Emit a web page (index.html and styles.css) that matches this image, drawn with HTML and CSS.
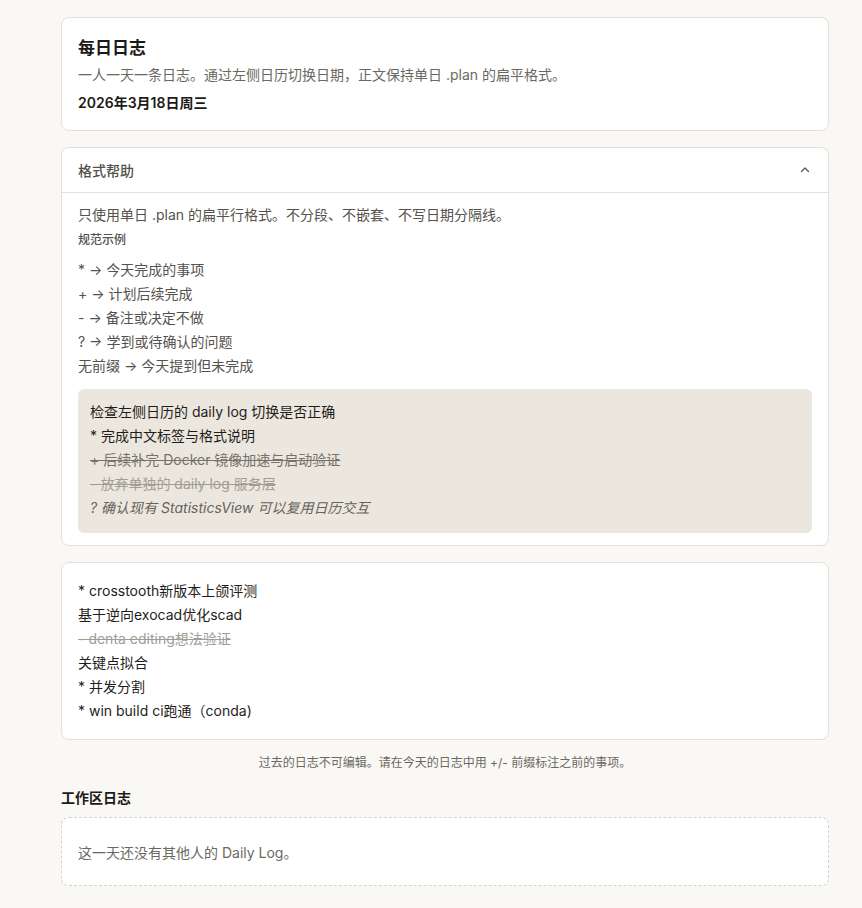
FILE: index.html
```html
<!DOCTYPE html>
<html lang="zh-CN">
<head>
<meta charset="utf-8">
<link rel="stylesheet" href="styles.css">
</head>
<body>
<main class="page">
  <section class="card intro">
    <h1 class="title">每日日志</h1>
    <p class="subtitle">一人一天一条日志。通过左侧日历切换日期，正文保持单日 .plan 的扁平格式。</p>
    <p class="date">2026年3月18日周三</p>
  </section>

  <section class="card help">
    <div class="help-head">
      <span>格式帮助</span>
      <svg class="chev" width="12" height="12" viewBox="0 0 12 12"><path d="M2.5 7.5 L6 4 L9.5 7.5" fill="none" stroke="#555" stroke-width="1.3" stroke-linecap="round" stroke-linejoin="round"/></svg>
    </div>
    <div class="help-body">
      <p class="rule">只使用单日 .plan 的扁平行格式。不分段、不嵌套、不写日期分隔线。</p>
      <p class="label">规范示例</p>
      <ul class="legend">
        <li>* → 今天完成的事项</li>
        <li>+ → 计划后续完成</li>
        <li>- → 备注或决定不做</li>
        <li>? → 学到或待确认的问题</li>
        <li>无前缀 → 今天提到但未完成</li>
      </ul>
      <div class="example">
        <div class="ln">检查左侧日历的 daily log 切换是否正确</div>
        <div class="ln">* 完成中文标签与格式说明</div>
        <div class="ln plus">+ 后续补完 Docker 镜像加速与启动验证</div>
        <div class="ln minus">- 放弃单独的 daily log 服务层</div>
        <div class="ln q">? 确认现有 StatisticsView 可以复用日历交互</div>
      </div>
    </div>
  </section>

  <section class="card log">
    <div class="ln">* crosstooth新版本上颌评测</div>
    <div class="ln">基于逆向exocad优化scad</div>
    <div class="ln minus">- denta editing想法验证</div>
    <div class="ln">关键点拟合</div>
    <div class="ln">* 并发分割</div>
    <div class="ln">* win build ci跑通（conda)</div>
  </section>

  <p class="note">过去的日志不可编辑。请在今天的日志中用 +/- 前缀标注之前的事项。</p>

  <h2 class="section-title">工作区日志</h2>
  <div class="empty">这一天还没有其他人的 Daily Log。</div>
</main>
</body>
</html>
```
FILE: styles.css
```css
* { box-sizing: border-box; }
html, body { margin: 0; padding: 0; }
body {
  background: #f9f8f5;
  font-family: "Inter", "Noto Sans CJK SC", sans-serif;
  color: #1f1d1a;
  font-size: 14px;
}
.page {
  width: 768px;
  margin-left: 61px;
  padding-top: 17px;
  padding-bottom: 22px;
}
.card {
  background: #fff;
  border: 1px solid #e3e0da;
  border-radius: 8px;
}
.intro {
  padding: 17px 16px 15px;
}
.title {
  margin: 0;
  font-size: 17px;
  line-height: 26px;
  font-weight: 700;
  color: #1c1a17;
}
.subtitle {
  margin: 2px 0 0;
  font-size: 14px;
  line-height: 24px;
  color: #6b6862;
}
.date {
  margin: 4px 0 0;
  font-size: 14px;
  line-height: 24px;
  font-weight: 600;
  color: #1c1a17;
}
.help {
  margin-top: 16px;
}
.help-head {
  height: 45px;
  padding: 0 16px;
  display: flex;
  align-items: center;
  justify-content: space-between;
  border-bottom: 1px solid #e3e0da;
  color: #55524d;
  font-size: 14px;
  font-weight: 500;
}
.chev { margin-right: 1px; }
.help-body {
  padding: 10px 16px 12px;
}
.rule {
  margin: 0;
  line-height: 24px;
  color: #55524d;
}
.label {
  margin: 5px 0 0;
  font-size: 12px;
  line-height: 16px;
  font-weight: 500;
  color: #55524d;
}
.legend {
  list-style: none;
  margin: 10px 0 0;
  padding: 0;
  color: #55524d;
  line-height: 24px;
}
.example {
  margin-top: 11px;
  background: #ebe7de;
  border-radius: 6px;
  padding: 11px 12px 13px;
}
.ln {
  line-height: 24px;
  color: #1f1d1a;
}
.plus {
  color: #75716b;
  text-decoration: line-through;
}
.minus {
  color: #a19d96;
  text-decoration: line-through;
}
.q {
  color: #66625c;
  font-style: italic;
}
.log {
  margin-top: 16px;
  padding: 16px 16px 16px;
}
.note {
  margin: 11px 0 0;
  text-align: center;
  font-size: 12px;
  line-height: 24px;
  color: #6b6862;
}
.section-title {
  margin: 11px 0 0;
  font-size: 14px;
  line-height: 24px;
  font-weight: 700;
  color: #1c1a17;
}
.empty {
  margin-top: 7px;
  height: 69px;
  background: #fff;
  border: 1px dashed #d6d3cd;
  border-radius: 8px;
  padding: 0 16px;
  display: flex;
  align-items: center;
  color: #6b6862;
}
```
